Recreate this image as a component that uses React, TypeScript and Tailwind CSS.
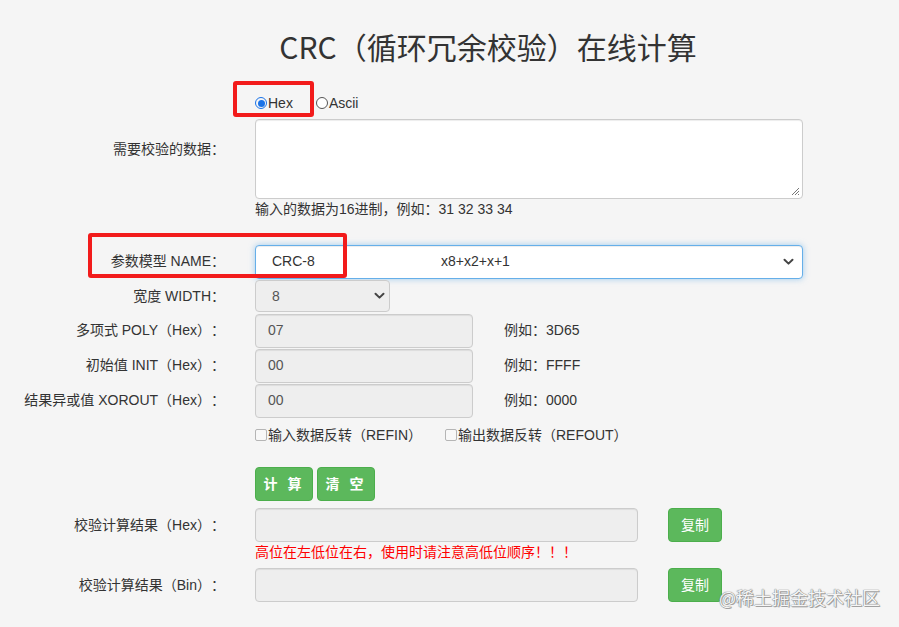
import React from "react";

const font = "font-['Liberation_Sans','Noto_Sans_CJK_SC',sans-serif]";

function Chevron({ className = "" }: { className?: string }) {
  return (
    <svg className={className} width="11" height="8" viewBox="0 0 11 8" fill="none">
      <path d="M1.5 1.8 L5.5 5.6 L9.5 1.8" stroke="#444" strokeWidth="2" strokeLinecap="round" strokeLinejoin="round" />
    </svg>
  );
}

function Row({ label, children, h = "h-[35px]" }: { label?: string; children: React.ReactNode; h?: string }) {
  return (
    <div className={`flex items-center ${h}`}>
      <div className="w-[225px] shrink-0 text-right text-[14px] text-[#333] whitespace-nowrap">{label}</div>
      <div className="ml-[30px] flex items-center">{children}</div>
    </div>
  );
}

function GrayInput({ value, w }: { value: string; w: string }) {
  return (
    <div className={`${w} h-[34px] flex items-center px-[12px] bg-[#eeeeee] border border-[#cccccc] rounded-[4px] text-[14px] text-[#555] shadow-[inset_0_1px_1px_rgba(0,0,0,0.075)]`}>
      {value}
    </div>
  );
}

function Checkbox() {
  return <span className="inline-block w-[12px] h-[12px] border border-[#b5b5b5] bg-[#f8f8f8] rounded-[2px] mr-[1px]" />;
}

export default function App() {
  return (
    <div className={`relative w-[899px] h-[627px] bg-[#f5f5f5] overflow-hidden text-[14px] [text-spacing-trim:space-all] ${font}`}>
      <h1 className="mt-[29px] text-center text-[30px] leading-[34px] text-[#333] font-['Noto_Sans_CJK_SC',sans-serif] font-normal pl-[77px]">
        CRC（循环冗余校验）在线计算
      </h1>

      {/* radio row */}
      <div className="mt-[30px] flex items-center h-[20px]">
        <div className="w-[255px] shrink-0" />
        <div className="flex items-center text-[14px] text-[#333]">
          <span className="w-[12px] h-[12px] rounded-full border-[1.5px] border-[#1a73e8] flex items-center justify-center mr-[1px]">
            <span className="w-[7px] h-[7px] rounded-full bg-[#1a73e8]" />
          </span>
          <span>Hex</span>
          <span className="ml-[23px] w-[12px] h-[12px] rounded-full border border-[#555] bg-white mr-[1px]" />
          <span>Ascii</span>
        </div>
      </div>

      {/* textarea */}
      <div className="mt-[6px] flex">
        <div className="w-[225px] shrink-0 text-right text-[14px] text-[#333] pt-[20px]">需要校验的数据：</div>
        <div className="ml-[30px] relative w-[548px] h-[80px] bg-white border border-[#cccccc] rounded-[4px] shadow-[inset_0_1px_1px_rgba(0,0,0,0.075)]">
          <svg className="absolute right-[2px] bottom-[2px]" width="9" height="9" viewBox="0 0 9 9">
            <path d="M8 1 L1 8 M8 4 L4 8 M8 7 L7 8" stroke="#777" strokeWidth="1" />
          </svg>
        </div>
      </div>
      <div className="ml-[255px] text-[14px] leading-[20px] text-[#333]">输入的数据为16进制，例如：31 32 33 34</div>

      {/* name select */}
      <div className="mt-[25px]">
        <Row label="参数模型 NAME：" h="h-[35px]">
          <div className="w-[548px] h-[34px] flex items-center bg-white border border-[#66afe9] rounded-[4px] shadow-[inset_0_1px_1px_rgba(0,0,0,0.075),0_0_6px_rgba(102,175,233,0.6)] text-[14px] text-[#333] pl-[16px] pr-[8px]">
            <span className="w-[169px]">CRC-8</span>
            <span className="flex-1">x8+x2+x+1</span>
            <Chevron />
          </div>
        </Row>
      </div>
      <Row label="宽度 WIDTH：" h="h-[34px]">
        <div className="w-[135px] h-[32px] flex items-center bg-[#eeeeee] border border-[#cccccc] rounded-[4px] text-[14px] text-[#555] pl-[16px] pr-[4px]">
          <span className="flex-1">8</span>
          <Chevron />
        </div>
      </Row>
      <Row label="多项式 POLY（Hex）：">
        <GrayInput value="07" w="w-[218px]" />
        <span className="ml-[31px] text-[14px] text-[#333]">例如：3D65</span>
      </Row>
      <Row label="初始值 INIT（Hex）：">
        <GrayInput value="00" w="w-[218px]" />
        <span className="ml-[31px] text-[14px] text-[#333]">例如：FFFF</span>
      </Row>
      <Row label="结果异或值 XOROUT（Hex）：">
        <GrayInput value="00" w="w-[218px]" />
        <span className="ml-[31px] text-[14px] text-[#333]">例如：0000</span>
      </Row>

      {/* checkboxes */}
      <div className="h-[34px] flex items-center pl-[255px] text-[14px] text-[#333]">
        <div className="w-[190px] flex items-center">
          <Checkbox />
          <span>输入数据反转（REFIN）</span>
        </div>
        <div className="flex items-center">
          <Checkbox />
          <span>输出数据反转（REFOUT）</span>
        </div>
      </div>

      {/* buttons */}
      <div className="mt-[15px] pl-[255px] flex gap-[4px]">
        <button className="w-[58px] h-[34px] rounded-[4px] bg-[#5cb85c] border border-[#4cae4c] text-white text-[14px] tracking-[3px] font-semibold">计 算</button>
        <button className="w-[58px] h-[34px] rounded-[4px] bg-[#5cb85c] border border-[#4cae4c] text-white text-[14px] tracking-[3px] font-semibold">清 空</button>
      </div>

      {/* hex result */}
      <div className="mt-[7px]">
        <Row label="校验计算结果（Hex）：" h="h-[34px]">
          <GrayInput value="" w="w-[383px]" />
          <button className="ml-[30px] w-[54px] h-[34px] rounded-[4px] bg-[#5cb85c] border border-[#4cae4c] text-white text-[14px]">复制</button>
        </Row>
      </div>
      <div className="ml-[255px] text-[14px] leading-[20px] text-[#ff0000]">高位在左低位在右，使用时请注意高低位顺序！！！</div>
      <div className="mt-[6px]">
        <Row label="校验计算结果（Bin）：" h="h-[34px]">
          <GrayInput value="" w="w-[383px]" />
          <button className="ml-[30px] w-[54px] h-[34px] rounded-[4px] bg-[#5cb85c] border border-[#4cae4c] text-white text-[14px]">复制</button>
        </Row>
      </div>

      {/* annotation boxes */}
      <div className="absolute left-[233px] top-[81px] w-[81px] h-[36px] border-[4px] border-[#f21b1b] rounded-[3px]" />
      <div className="absolute left-[88px] top-[233px] w-[259px] h-[45px] border-[4px] border-[#f21b1b] rounded-[3px]" />

      {/* watermark */}
      <div className="absolute left-[719px] top-[585px] text-[18px] leading-[24px] text-[#f5f5f5] font-['Noto_Sans_CJK_SC',sans-serif] [text-shadow:0_0_1px_#777,0_0_1px_#777,1px_1px_0_#aaa]">
        @稀土掘金技术社区
      </div>
    </div>
  );
}
